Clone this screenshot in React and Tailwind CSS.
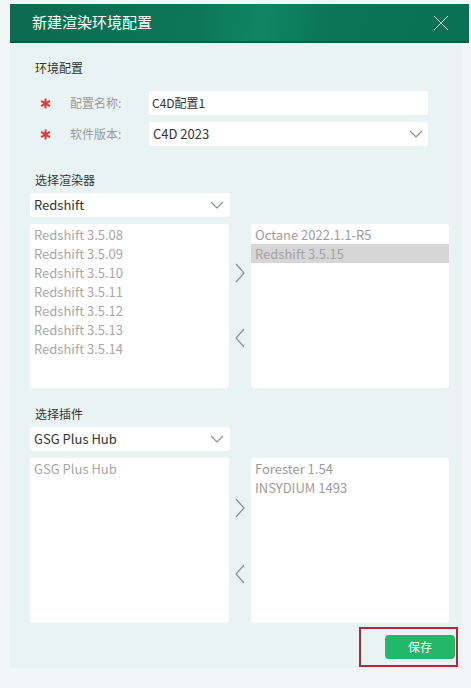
import React from "react";

const font = { fontFamily: '"Noto Sans CJK SC", "Noto Sans", sans-serif' };

function Chevron({ className = "" }) {
  return (
    <svg className={className} width="14" height="8" viewBox="0 0 14 8" fill="none">
      <path d="M1 1l6 6 6-6" stroke="#8a8f92" strokeWidth="1.2" />
    </svg>
  );
}

function Arrow({ dir }) {
  return (
    <svg width="10" height="20" viewBox="0 0 10 20" fill="none">
      {dir === "right" ? (
        <path d="M1 1l8 9-8 9" stroke="#8c9194" strokeWidth="1.2" />
      ) : (
        <path d="M9 1l-8 9 8 9" stroke="#8c9194" strokeWidth="1.2" />
      )}
    </svg>
  );
}

function Star() {
  return (
    <span className="w-[40px] pl-[10px] flex items-center">
      <svg width="11" height="11" viewBox="0 0 12 12">
        <path d="M6 0.5v11M1.2 3.2l9.6 5.6M10.8 3.2l-9.6 5.6" stroke="#e8333a" strokeWidth="2.2" />
      </svg>
    </span>
  );
}

function Select({ value }) {
  return (
    <div className="w-[200px] h-[24px] bg-white rounded-[3px] flex items-center justify-between pl-[4px] pr-[6px]">
      <span className="text-[13px] text-[#333]">{value}</span>
      <Chevron />
    </div>
  );
}

function Transfer({ left, right, selected, h, top1, top2 }) {
  return (
    <div className="flex mt-[6px]">
      <div className="w-[199px] bg-white rounded-[3px] pt-[1px]" style={{ height: h }}>
        {left.map((x) => (
          <div key={x} className="h-[19px] leading-[19px] pl-[4px] text-[13px] text-[#a8a8a8]">
            {x}
          </div>
        ))}
      </div>
      <div className="w-[22px] flex flex-col items-center">
        <div style={{ marginTop: top1 }}>
          <Arrow dir="right" />
        </div>
        <div style={{ marginTop: top2 }}>
          <Arrow dir="left" />
        </div>
      </div>
      <div className="w-[198px] bg-white rounded-[3px] pt-[1px]" style={{ height: h }}>
        {right.map((x) => (
          <div
            key={x}
            className={
              "h-[19px] leading-[19px] pl-[4px] text-[13px] " +
              (x === selected ? "bg-[#d6d6d6] text-[#a3a3a3]" : "text-[#9c9c9c]")
            }
          >
            {x}
          </div>
        ))}
      </div>
    </div>
  );
}

export default function App() {
  return (
    <div className="w-[471px] h-[688px] bg-[#f1f6f7] pt-[4px] pl-[10px]" style={font}>
      <div className="w-[459px] h-[39px] flex items-center justify-between pl-[22px] pr-[20px] bg-[linear-gradient(100deg,#0b6a4f_0%,#0c7656_40%,#0f8663_55%,#0b7456_70%,#0a7153_100%)] border-b-2 border-[#095a43]">
        <span className="text-[15px] text-white">新建渲染环境配置</span>
        <svg width="16" height="16" viewBox="0 0 16 16" fill="none">
          <path d="M1 1l14 14M15 1L1 15" stroke="#cfe9df" strokeWidth="1" />
        </svg>
      </div>

      <div className="w-[452px] h-[625px] bg-[#e9f3f4] pl-[20px] pt-[16px]">
        <div className="pl-[5px] text-[12px] text-[#333] leading-[17px]">环境配置</div>

        <div className="mt-[15px] flex items-center h-[24px]">
          <Star />
          <span className="w-[79px] text-[12px] text-[#9a9a9a]">配置名称:</span>
          <div className="w-[279px] h-[24px] bg-white rounded-[2px] flex items-center pl-[3px] text-[12px] text-[#333]">
            C4D配置1
          </div>
        </div>
        <div className="mt-[7px] flex items-center h-[24px]">
          <Star />
          <span className="w-[79px] text-[12px] text-[#9a9a9a]">软件版本:</span>
          <div className="w-[279px] h-[24px] bg-white rounded-[2px] flex items-center justify-between pl-[4px] pr-[5px] text-[13px] text-[#333]">
            C4D 2023
            <Chevron />
          </div>
        </div>

        <div className="mt-[25px] pl-[5px] text-[12px] text-[#333] leading-[17px]">选择渲染器</div>
        <div className="mt-[5px]">
          <Select value="Redshift" />
        </div>
        <div className="pt-[1px]">
          <Transfer
            h={164}
            top1={39}
            top2={45}
            left={[
              "Redshift 3.5.08",
              "Redshift 3.5.09",
              "Redshift 3.5.10",
              "Redshift 3.5.11",
              "Redshift 3.5.12",
              "Redshift 3.5.13",
              "Redshift 3.5.14",
            ]}
            right={["Octane 2022.1.1-R5", "Redshift 3.5.15"]}
            selected="Redshift 3.5.15"
          />
        </div>

        <div className="mt-[17px] pl-[5px] text-[12px] text-[#333] leading-[17px]">选择插件</div>
        <div className="mt-[5px]">
          <Select value="GSG Plus Hub" />
        </div>
        <div className="pt-[1px]">
          <Transfer
            h={165}
            top1={40}
            top2={46}
            left={["GSG Plus Hub"]}
            right={["Forester 1.54", "INSYDIUM 1493"]}
          />
        </div>

        <div className="flex justify-end w-[428px] mt-[4px]">
          <div className="w-[99px] h-[40px] border-2 border-[#b02a3c] flex items-center justify-end pr-[1px]">
            <button className="w-[70px] h-[24px] bg-[#21b86b] rounded-[4px] text-white text-[12px]">
              保存
            </button>
          </div>
        </div>
      </div>
    </div>
  );
}
